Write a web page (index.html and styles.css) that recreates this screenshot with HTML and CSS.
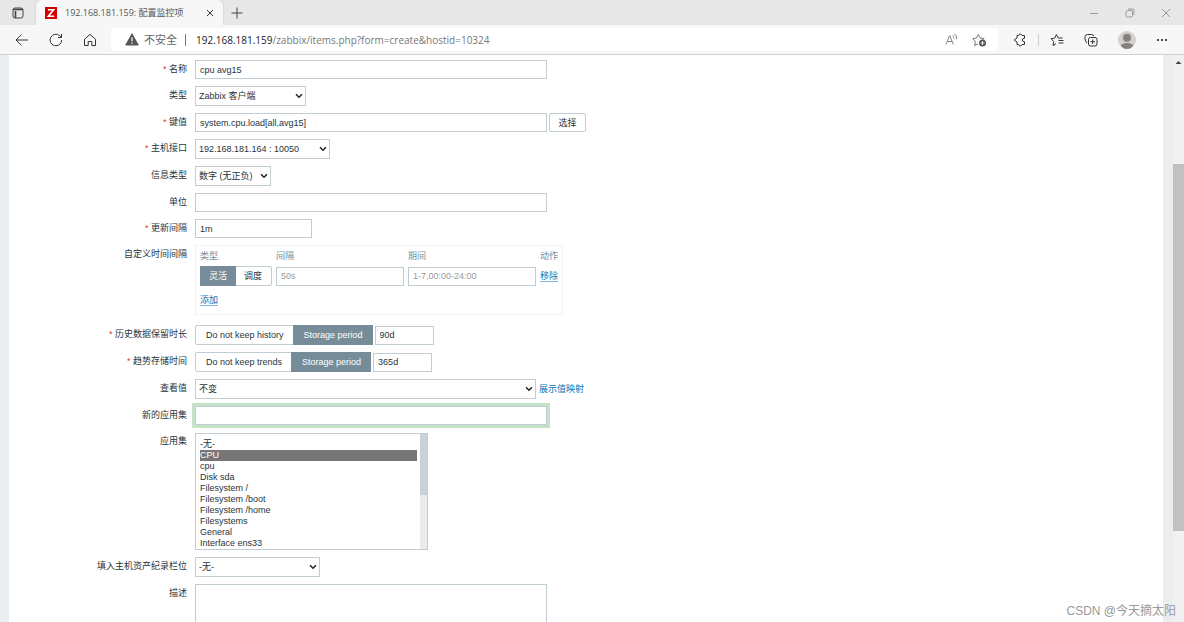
FILE: index.html
```
<!DOCTYPE html>
<html lang="zh-CN">
<head>
<meta charset="utf-8">
<title>192.168.181.159: 配置监控项</title>
<link rel="stylesheet" href="styles.css">
</head>
<body>
<header class="browser">
  <div class="tabbar">
    <button class="icon-btn tab-actions" aria-label="标签操作"><svg width="12" height="12" viewBox="0 0 12 12"><rect x="1" y="1" width="10" height="10" rx="2" fill="none" stroke="#444"/><path d="M1 2.500h10M3.500 4v7" stroke="#444" stroke-width="1.600"/></svg></button>
    <div class="tab">
      <svg width="12" height="12" viewBox="0 0 12 12"><path fill="#d40000" d="M0 0h12v12H0z"/><path d="M3 2.800h5.600L3.400 9.200H9.200" fill="none" stroke="#fff" stroke-width="1.600"/></svg>
      <span class="tab-title">192.168.181.159: 配置监控项</span>
      <button class="icon-btn" aria-label="关闭标签"><svg width="8" height="8" viewBox="0 0 8 8"><path d="M1 1l6 6M7 1L1 7" stroke="#333"/></svg></button>
    </div>
    <button class="icon-btn new-tab" aria-label="新建标签"><svg width="12" height="12" viewBox="0 0 12 12"><path d="M6 .5v11M.5 6h11" stroke="#444"/></svg></button>
    <div class="window-controls">
      <button class="icon-btn" aria-label="最小化"><svg width="10" height="10" viewBox="0 0 10 10"><path d="M1 5.500h8" stroke="#999"/></svg></button>
      <button class="icon-btn" aria-label="还原"><svg width="10" height="10" viewBox="0 0 10 10"><rect x="1" y="2.500" width="6.500" height="6.500" rx="1.500" fill="none" stroke="#999"/><path d="M3 1h4.500Q9 1 9 2.500V7" fill="none" stroke="#999"/></svg></button>
      <button class="icon-btn" aria-label="关闭"><svg width="10" height="10" viewBox="0 0 10 10"><path d="M1 1l8 8M9 1L1 9" stroke="#999"/></svg></button>
    </div>
  </div>
  <div class="toolbar">
    <nav class="nav-buttons">
      <button class="icon-btn" aria-label="后退"><svg width="14" height="14" viewBox="0 0 14 14"><path d="M13 7H1.500M6.500 1.500L1 7l5.500 5.500" fill="none" stroke="#333"/></svg></button>
      <button class="icon-btn" aria-label="刷新"><svg width="14" height="14" viewBox="0 0 14 14"><path d="M12.700 7A5.800 5.800 0 1 1 10.800 2.700L12.300 4.200M12.500 1v3.500H9" fill="none" stroke="#333"/></svg></button>
      <button class="icon-btn" aria-label="主页"><svg width="14" height="14" viewBox="0 0 14 14"><path d="M1.500 6.200L7 1.400l5.500 4.800v6.300H8.800V8.500H5.200v4H1.500z" fill="none" stroke="#333" stroke-linejoin="round"/></svg></button>
    </nav>
    <div class="address">
      <svg width="14" height="13" viewBox="0 0 14 13"><path d="M7 .8L13.200 12H.8z" fill="#555" stroke="#555" stroke-linejoin="round"/><path d="M7 4.200v4M7 9.400v1.300" stroke="#fff" stroke-width="1.200"/></svg>
      <span class="insecure">不安全</span>
      <span class="bar"></span>
      <span class="url" role="textbox" contenteditable="true" spellcheck="false" aria-label="地址"><span class="host">192.168.181.159</span>/zabbix/items.php?form=create&amp;hostid=10324</span>
      <button class="icon-btn" aria-label="朗读"><svg width="13" height="13" viewBox="0 0 13 13"><path d="M1 11.500L4.700 2.500l3.700 9M2.300 8.500h4.800M7.500 2.500q1.500 1 1.300 3M9.300.8q3 2 2.300 5.400" fill="none" stroke="#777" stroke-width=".9"/></svg></button>
      <button class="icon-btn" aria-label="收藏此页"><svg width="15" height="14" viewBox="0 0 15 14"><path d="M6 11L2.700 12.500l.6-4L.8 5.600l3.700-.6L6.300 1.500 8.200 5l3.800.6-1.200 1.200" fill="none" stroke="#777" stroke-linejoin="round"/><circle cx="10.500" cy="10" r="3.500" fill="#555"/><path d="M10.500 8v4M8.500 10h4" stroke="#fff" stroke-width=".9"/></svg></button>
    </div>
    <div class="tools">
      <button class="icon-btn" aria-label="扩展"><svg width="14" height="14" viewBox="0 0 14 14"><path d="M4 2.500H5.500Q5.800 1 7.200 1T9 2.500H11.500V5.300Q9.200 5.500 9.200 7T11.500 8.700V11.500H9Q8.600 13 7.200 13T5.500 11.500H4V9L1.200 7 4 5z" fill="none" stroke="#333" stroke-linejoin="round"/></svg></button>
      <span class="bar light"></span>
      <button class="icon-btn" aria-label="收藏夹"><svg width="14" height="14" viewBox="0 0 14 14"><path d="M6 10.700L3 12.500l.7-4L1 5.700l3.700-.6L6.400 1.500 8.200 5H12.500M8.500 7.500H13.500M8.500 10H13.500" fill="none" stroke="#333" stroke-linejoin="round"/></svg></button>
      <button class="icon-btn" aria-label="集锦"><svg width="14" height="14" viewBox="0 0 14 14"><rect x="4.500" y="4.500" width="8.500" height="8.500" rx="2" fill="none" stroke="#333"/><path d="M8.700 6.500v4.500M6.500 8.700H11M3 10Q1 8 1 6V3.500Q1.500 1.500 3.500 1.500H7.500Q9.500 1.500 9.700 3" fill="none" stroke="#333"/></svg></button>
      <button class="icon-btn" aria-label="个人资料"><svg width="18" height="18" viewBox="0 0 18 18"><circle cx="9" cy="9" r="9" fill="#d3d0cd"/><circle cx="9" cy="6.700" r="4" fill="#84807d"/><path d="M2.800 14.500Q4 12 9 12t6.200 2.500Q13 18 9 18t-6.200-3.500z" fill="#84807d"/></svg></button>
      <button class="icon-btn" aria-label="更多"><svg width="12" height="12" viewBox="0 0 12 12"><g fill="#222"><circle cx="2" cy="6" r="1.100"/><circle cx="6" cy="6" r="1.100"/><circle cx="10" cy="6" r="1.100"/></g></svg></button>
    </div>
  </div>
</header>
<div class="viewport">
  <main class="page">
    <form class="form">
      <label class="label required" for="name">名称</label>
      <div class="field"><input class="text wide" id="name" type="text" value="cpu avg15"></div>

      <label class="label" for="type">类型</label>
      <div class="field"><select class="select type" id="type"><option>Zabbix 客户端</option></select></div>

      <label class="label required" for="key">键值</label>
      <div class="field"><input class="text wide" id="key" type="text" value="system.cpu.load[all,avg15]"><button class="button" type="button">选择</button></div>

      <label class="label required" for="interface">主机接口</label>
      <div class="field"><select class="select interface" id="interface"><option>192.168.181.164 : 10050</option></select></div>

      <label class="label" for="value-type">信息类型</label>
      <div class="field"><select class="select value-type" id="value-type"><option>数字 (无正负)</option></select></div>

      <label class="label" for="units">单位</label>
      <div class="field"><input class="text wide" id="units" type="text"></div>

      <label class="label required" for="delay">更新间隔</label>
      <div class="field"><input class="text delay" id="delay" type="text" value="1m"></div>

      <span class="label">自定义时间间隔</span>
      <div class="intervals">
        <table class="interval-table">
          <thead><tr><th>类型</th><th>间隔</th><th>期间</th><th>动作</th></tr></thead>
          <tbody>
            <tr>
              <td><div class="segment">
                <input type="radio" name="flex" id="flex-0" checked><label for="flex-0">灵活</label>
                <input type="radio" name="flex" id="flex-1"><label for="flex-1">调度</label>
              </div></td>
              <td><input class="text interval" type="text" placeholder="50s" aria-label="间隔"></td>
              <td><input class="text interval" type="text" placeholder="1-7,00:00-24:00" aria-label="期间"></td>
              <td><a class="action" href="#">移除</a></td>
            </tr>
            <tr><td class="add" colspan="4"><a class="action" href="#">添加</a></td></tr>
          </tbody>
        </table>
      </div>

      <label class="label required" for="history">历史数据保留时长</label>
      <div class="field">
        <div class="segment roomy">
          <input type="radio" name="hist" id="hist-0"><label for="hist-0">Do not keep history</label>
          <input type="radio" name="hist" id="hist-1" checked><label for="hist-1">Storage period</label>
        </div>
        <input class="text period" id="history" type="text" value="90d">
      </div>

      <label class="label required" for="trends">趋势存储时间</label>
      <div class="field">
        <div class="segment roomy">
          <input type="radio" name="trend" id="trend-0"><label for="trend-0">Do not keep trends</label>
          <input type="radio" name="trend" id="trend-1" checked><label for="trend-1">Storage period</label>
        </div>
        <input class="text period" id="trends" type="text" value="365d">
      </div>

      <label class="label" for="valuemap">查看值</label>
      <div class="field"><select class="select valuemap" id="valuemap"><option>不变</option></select><a class="link" href="#">展示值映射</a></div>

      <label class="label" for="new-app">新的应用集</label>
      <div class="field"><input class="text wide highlighted" id="new-app" type="text"></div>

      <label class="label" for="apps">应用集</label>
      <div class="listbox">
        <select class="list" id="apps" multiple size="10">
          <option>-无-</option><option selected>CPU</option><option>cpu</option><option>Disk sda</option><option>Filesystem /</option><option>Filesystem /boot</option><option>Filesystem /home</option><option>Filesystems</option><option>General</option><option>Interface ens33</option>
        </select>
        <div class="list-track"><div class="list-thumb"></div></div>
      </div>

      <label class="label" for="inventory">填入主机资产纪录栏位</label>
      <div class="field"><select class="select inventory" id="inventory"><option>-无-</option></select></div>

      <label class="label" for="description">描述</label>
      <div class="field"><textarea class="text wide description" id="description"></textarea></div>
    </form>
  </main>
  <div class="scrollbar">
    <svg width="11" height="11" viewBox="0 0 11 11"><path d="M2.500 7L5.500 4l3 3z" fill="#444"/></svg>
    <div class="scroll-space"></div>
    <div class="scroll-thumb"></div>
  </div>
</div>
<div class="watermark">CSDN @今天摘太阳</div>
</body>
</html>
```

FILE: styles.css
```
* { box-sizing: border-box; }

body {
  margin: 0;
  height: 100vh;
  display: flex;
  flex-direction: column;
  overflow: hidden;
  font: 9px/12px "Liberation Sans", "Noto Sans CJK SC", sans-serif;
  color: #27343b;
}

input, select, button, textarea { font: inherit; color: inherit; }

.icon-btn {
  display: flex;
  align-items: center;
  justify-content: center;
  padding: 0;
  border: 0;
  background: none;
}

/* Browser frame */
.browser { flex: none; font-family: "Open Sans", "Noto Sans CJK SC", sans-serif; }

.tabbar {
  display: flex;
  align-items: center;
  height: 25px;
  background: #e7e7e7;
}
.tab-actions { width: 36px; }
.tab {
  display: flex;
  align-items: center;
  align-self: stretch;
  gap: 8px;
  width: 187px;
  padding: 0 9px;
  background: #f7f7f7;
  border-radius: 5px 5px 0 0;
  box-shadow: 0 0 2px #bbb;
  color: #555;
}
.tab-title { flex: 1; white-space: nowrap; }
.new-tab { width: 27px; }
.window-controls { display: flex; gap: 26px; margin-left: auto; padding-right: 13px; }

.toolbar {
  position: relative;
  display: flex;
  align-items: center;
  height: 30px;
  background: #f7f7f7;
  border-bottom: 1px solid #d0d0d0;
}
.nav-buttons { display: flex; gap: 20px; padding: 0 14px 0 15px; }
.address {
  flex: 1;
  display: flex;
  align-items: center;
  height: 23px;
  padding: 0 11px 0 14px;
  background: #fff;
  border-radius: 4px;
  font-size: 10px;
  color: #777;
}
.insecure { margin: 0 8px 0 5px; font-size: 11px; color: #666; }
.bar { width: 1px; height: 12px; background: #777; }
.bar.light { background: #ccc; }
.url { flex: 1; margin-left: 10px; white-space: nowrap; }
.host { color: #222; }
.address .icon-btn { margin-left: 14px; }
.tools { display: flex; align-items: center; padding: 0 16px 0 15px; }
.tools .icon-btn + .bar { margin: 0 11px; }
.tools .icon-btn + .icon-btn { margin-left: 20px; }

/* Page */
.viewport {
  flex: 1;
  display: flex;
  min-height: 0;
  background: #ebeef0;
}
.page {
  flex: 1;
  margin: 0 10px 0 9px;
  padding-top: 5px;
  overflow: hidden;
  background: #fff;
}
.scrollbar {
  display: flex;
  flex-direction: column;
  width: 11px;
  padding-top: 2px;
  background: #f1f1f1;
}
.scroll-space { height: 96px; }
.scroll-thumb { height: 65%; background: #c1c1c1; }

/* Form */
.form {
  display: grid;
  grid-template-columns: 178px 1fr;
  column-gap: 8px;
  row-gap: 7px;
}
.label { padding-top: 3px; text-align: right; }
.required::before { content: "* "; color: #e33734; }
.field { display: flex; align-items: center; gap: 2px; }

.text {
  height: 19px;
  margin: 0;
  padding: 0 4px;
  border: 1px solid #c0cdd3;
  background: #fff;
  outline: none;
}
.text::placeholder { color: #999; }
.wide { width: 352px; }
.delay { width: 117px; }
.period { width: 59px; }
.interval { width: 128px; }
.description { height: 80px; resize: none; }
.highlighted { box-shadow: 0 0 0 3px #c5e3c7; }

.select {
  appearance: none;
  height: 20px;
  padding: 0 3px;
  border: 1px solid #c0cdd3;
  border-radius: 0;
  background: #fff url("data:image/svg+xml,%3Csvg xmlns='http://www.w3.org/2000/svg' width='8' height='6' viewBox='0 0 8 6'%3E%3Cpath d='M1 1.200l3 3 3-3' fill='none' stroke='%23222' stroke-width='1.500'/%3E%3C/svg%3E") no-repeat right 2px center;
}
.type { width: 111px; }
.interface { width: 135px; }
.value-type { width: 76px; }
.valuemap { width: 341px; }
.inventory { width: 125px; }

.button {
  height: 19px;
  width: 37px;
  padding: 0;
  border: 1px solid #c0cdd3;
  border-radius: 2px;
  background: #fff;
}

.segment {
  position: relative;
  display: flex;
  border: 1px solid #c0cdd3;
  border-radius: 2px;
}
.segment input { position: absolute; margin: 0; opacity: 0; }
.segment label { padding: 3px 9px; line-height: 12px; white-space: nowrap; }
.segment input:checked + label {
  margin: -1px;
  padding: 4px 9px;
  background: #768d99;
  color: #fff;
}
.segment.roomy label { padding-left: 10px; padding-right: 10px; }
.segment.roomy input:checked + label { padding-left: 11px; padding-right: 10px; }

.intervals {
  justify-self: start;
  height: 70px;
  margin-bottom: 3px;
  padding: 4px;
  border: 1px solid #f0f3f4;
}
.interval-table { border-collapse: collapse; }
.interval-table th {
  padding: 0 4px 4px 0;
  font-weight: normal;
  text-align: left;
  color: #768d99;
}
.interval-table td { padding: 0 4px 0 0; }
.interval-table th:last-child, .interval-table td:last-child { padding-right: 0; }
.interval-table td.add { padding-top: 8px; }
.link, .action { color: #0275b8; text-decoration: none; }
.link { margin-left: 1px; }
.action { border-bottom: 1px solid #80bae0; }

.listbox {
  display: flex;
  width: 233px;
  height: 117px;
  margin-top: 1px;
  border: 1px solid #c0cdd3;
}
.list {
  flex: 1;
  padding: 3px 3px 0 4px;
  border: 0;
  outline: none;
  overflow: hidden;
  background: #fff;
}
.list option { min-height: 11px; padding: 0; line-height: 11px; }
.list option:checked {
  background: #767676 linear-gradient(#767676, #767676);
  color: #fff;
  -webkit-text-fill-color: #fff;
}
.list-track { width: 7px; background: #ebebeb; }
.list-thumb { height: 53%; background: #c8d2d7; }

.watermark {
  position: absolute;
  right: 8px;
  bottom: 3px;
  font-size: 12px;
  line-height: 16px;
  color: #999;
}
```
